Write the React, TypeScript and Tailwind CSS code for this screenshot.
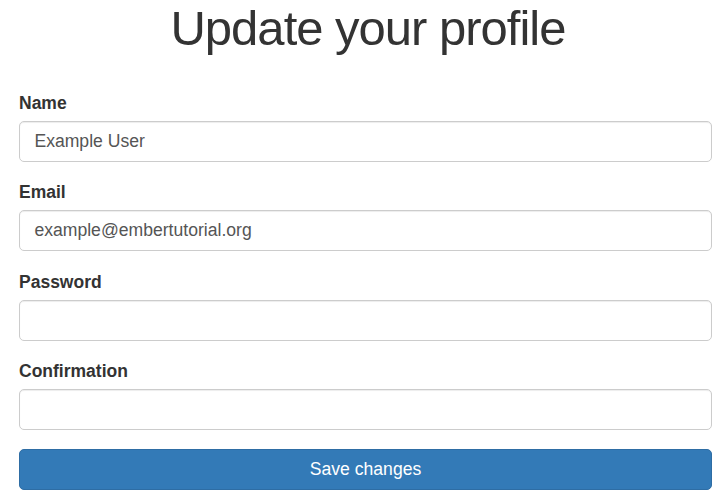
export default function App() {
  const fields = [
    { label: "Name", value: "Example User", type: "text" },
    { label: "Email", value: "example@embertutorial.org", type: "email" },
    { label: "Password", value: "", type: "password" },
    { label: "Confirmation", value: "", type: "password" },
  ];

  return (
    <div className="min-h-[500px] bg-white text-[#333] font-['Liberation_Sans',Arial,sans-serif]">
      <div className="pl-[19px] pr-[15px]">
        <h1 className="-mt-[2px] mb-[32.5px] pl-[5px] text-center text-[49px] leading-[60px] tracking-[-1px] text-[#333]">
          Update your profile
        </h1>
        <form onSubmit={(e) => e.preventDefault()}>
          {fields.map((f) => (
            <div key={f.label} className="mb-[18.5px]">
              <label className="mb-[6px] block text-[17.5px] font-bold leading-[24px]">{f.label}</label>
              <input
                type={f.type}
                defaultValue={f.value}
                className="block h-[41px] w-full rounded-[5px] border border-[#ccc] bg-white px-[14.4px] text-[17.6px] text-[#555] shadow-[inset_0_1px_1px_rgba(0,0,0,0.075)] outline-none"
              />
            </div>
          ))}
          <button
            type="submit"
            className="block h-[41px] w-full rounded-[5px] border border-[#2e6da4] bg-[#337ab7] text-[17.6px] text-white"
          >
            Save changes
          </button>
        </form>
      </div>
    </div>
  );
}
